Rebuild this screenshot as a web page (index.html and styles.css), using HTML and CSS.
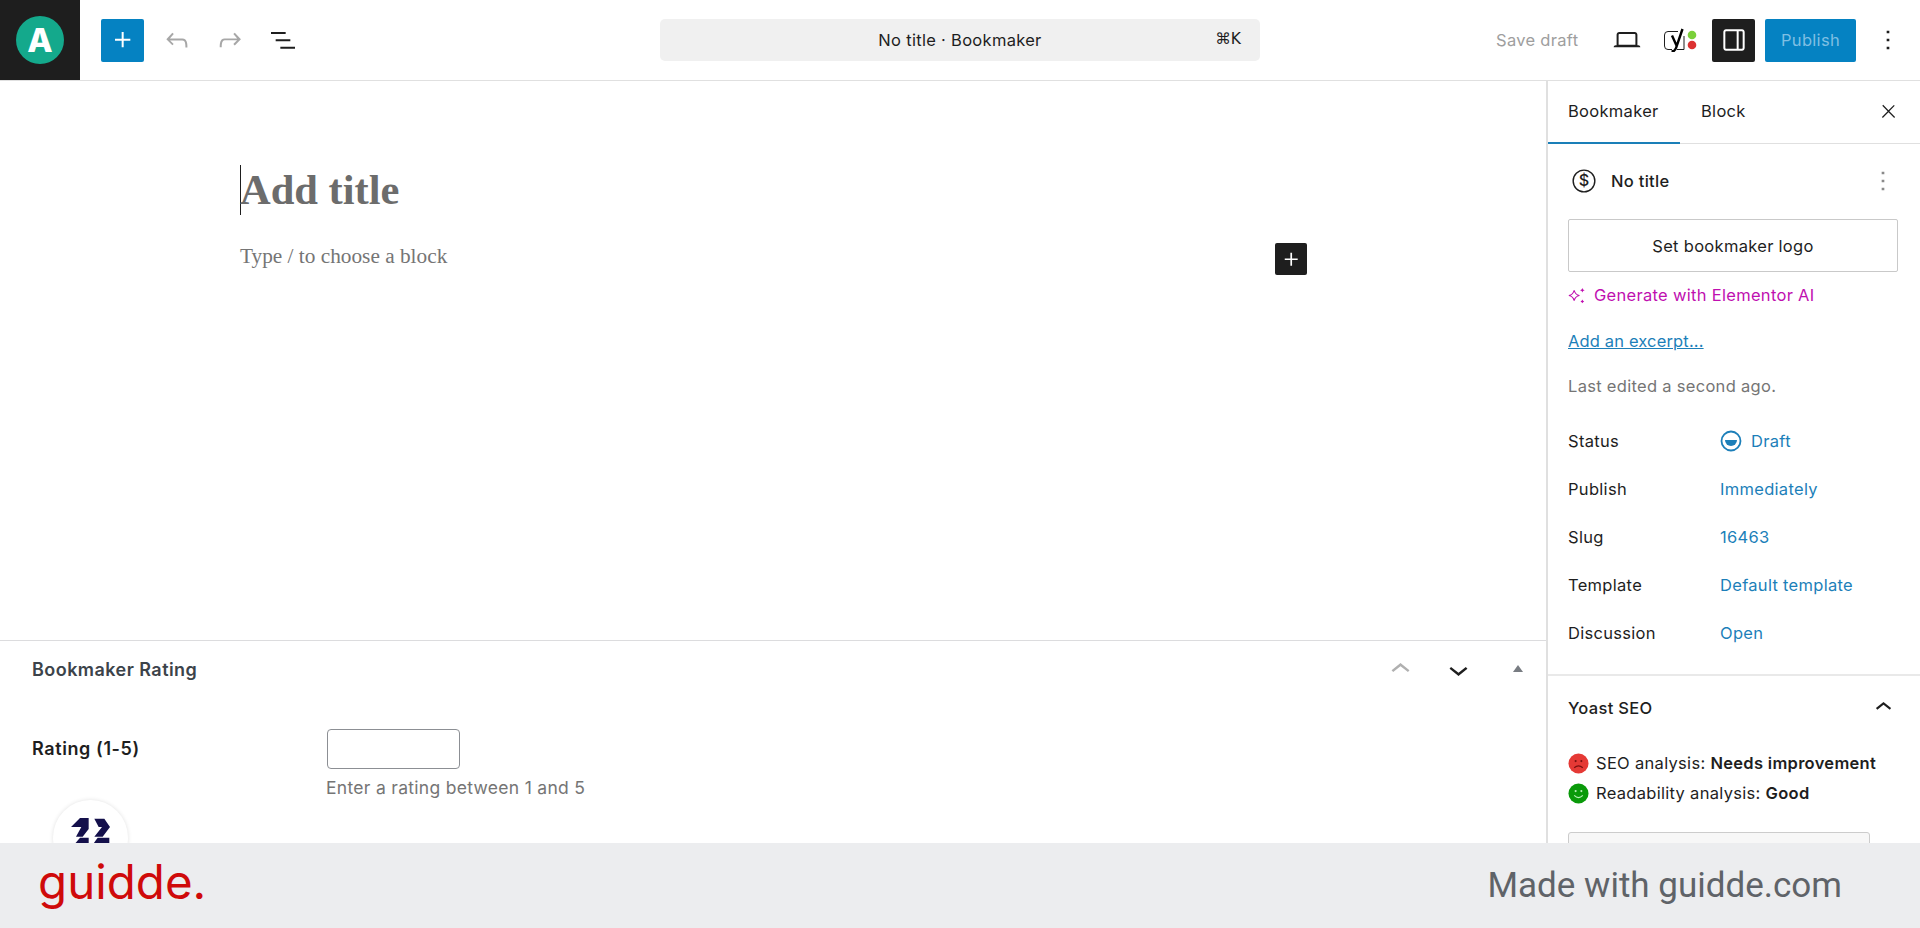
FILE: index.html
```html
<!DOCTYPE html>
<html lang="en">
<head>
<meta charset="utf-8">
<title>No title · Bookmaker</title>
<link rel="stylesheet" href="styles.css">
</head>
<body>
<div class="app">
  <header class="topbar">
    <div class="top-left">
      <div class="site-logo">
        <div class="site-circle">A</div>
      </div>
      <button class="btn-add"><svg class="ic" viewBox="0 0 24 24"><path d="M11 12.5V17.5H12.5V12.5H17.5V11H12.5V6H11V11H6V12.5H11Z"/></svg></button>
      <span class="tool tool-off"><svg class="ic" viewBox="0 0 24 24"><path d="M18.3 11.7c-.6-.6-1.4-.9-2.3-.9H6.7l2.9-3.3-1.1-1-4.5 5L8.5 16l1-1-2.7-2.7H16c.5 0 .9.2 1.3.5 1 1 1 3.4 1 4.5v.3h1.5v-.2c0-1.5 0-4.3-1.5-5.7z"/></svg></span>
      <span class="tool tool-off"><svg class="ic" viewBox="0 0 24 24"><path d="M15.6 6.5l-1.1 1 2.9 3.3H8c-.9 0-1.7.3-2.3.9-1.4 1.5-1.4 4.2-1.4 5.6v.2h1.5v-.3c0-1.1 0-3.5 1-4.5.3-.3.7-.5 1.3-.5h9.2L14.5 15l1.1 1.1 4.6-4.6-4.6-5z"/></svg></span>
      <span class="tool"><svg class="ic" viewBox="0 0 24 24"><path d="M3 6h11v1.5H3V6zm3.5 5.5h11V13h-11v-1.5zM21 17H10v1.5h11V17z"/></svg></span>
    </div>
    <div class="command-bar">
      <span class="command-title">No title · Bookmaker</span>
      <span class="command-key">⌘K</span>
    </div>
    <div class="top-right">
      <span class="save-draft">Save draft</span>
      <span class="tool tool-laptop"><svg class="ic" viewBox="0 0 24 24"><path d="M20.5 16h-.7V8c0-1.1-.9-2-2-2H6.2c-1.1 0-2 .9-2 2v8h-.7c-.8 0-1.5.7-1.5 1.5h20c0-.8-.7-1.5-1.5-1.5zM5.7 8c0-.3.2-.5.5-.5h11.6c.3 0 .5.2.5.5v7.6H5.7V8z"/></svg></span>
      <svg class="yoast" viewBox="0 0 34 24">
        <path d="M14 3.500H4a3.500 3.500 0 0 0-3.500 3.500v11a3.500 3.500 0 0 0 3.500 3.500H8M20 8v13.500H13" class="y-box"/>
        <path d="M8 7.500l4.500 10M18.500 1l-6.500 19q-1 3.500-4.500 3.500" class="y-mark"/>
        <circle cx="28" cy="7" r="4.300" fill="#7ad03a"/>
        <circle cx="28" cy="17" r="4.300" fill="#dc3232"/>
      </svg>
      <button class="btn-panel"><svg class="ic ic-white" viewBox="0 0 24 24"><path d="M18 4H6c-1.100 0-2 .9-2 2v12c0 1.100.9 2 2 2h12c1.100 0 2-.9 2-2V6c0-1.100-.9-2-2-2zm-4 14.500H6c-.3 0-.5-.2-.5-.5V6c0-.3.2-.5.5-.5h8v13zm4.500-.5c0 .3-.2.5-.5.5h-2.500v-13H18c.3 0 .5.2.5.5v12z"/></svg></button>
      <button class="btn-publish">Publish</button>
      <span class="tool tool-more"><svg class="ic" viewBox="0 0 24 24"><path d="M13 19h-2v-2h2v2zm0-6h-2v-2h2v2zm0-6h-2V5h2v2z"/></svg></span>
    </div>
  </header>

  <main class="workspace">
    <section class="editor">
      <div class="canvas">
        <div class="title-row">
          <span class="caret"></span>
          <h1 class="post-title">Add title</h1>
        </div>
        <div class="block-row">
          <p class="block-hint">Type / to choose a block</p>
          <button class="btn-block"><svg class="ic ic-white ic-small" viewBox="0 0 24 24"><path d="M11 12.500V17.500H12.500V12.500H17.500V11H12.500V6H11V11H6V12.500H11Z"/></svg></button>
        </div>
      </div>
      <div class="metabox">
        <div class="metabox-head">
          <h2 class="metabox-title">Bookmaker Rating</h2>
          <span class="mb-ctl mb-up"><svg class="ic ic-chev" viewBox="0 0 24 24"><path d="M6.500 12.400L12 8l5.500 4.400-.9 1.200L12 10l-4.500 3.600-1-1.200z"/></svg></span>
          <span class="mb-ctl mb-down"><svg class="ic ic-chev" viewBox="0 0 24 24"><path d="M17.500 11.600L12 16l-5.500-4.400.9-1.200L12 14l4.500-3.600 1 1.200z"/></svg></span>
          <span class="mb-triangle"></span>
        </div>
        <div class="metabox-row">
          <label class="rating-label">Rating (1-5)</label>
          <div class="rating-field">
            <div class="rating-input"></div>
            <p class="rating-help">Enter a rating between 1 and 5</p>
          </div>
        </div>
      </div>
      <div class="float-badge">
        <svg class="badge-mark" viewBox="95 70 117 75">
          <path d="M95 97L122 70H148V103L130 126H110L126 97Z" fill="#14104b"/>
          <path d="M122 129H148V146H108Z" fill="#14104b"/>
          <path d="M165 72H195L212 97L190 126H165L188 97H178Z" fill="#14104b"/>
          <path d="M175 129H210V146H163Z" fill="#14104b"/>
        </svg>
      </div>
    </section>

    <aside class="sidebar">
      <div class="tabs">
        <span class="tab tab-active">Bookmaker</span>
        <span class="tab tab-block">Block</span>
        <span class="tab-close"><svg class="ic ic-close" viewBox="0 0 24 24"><path d="M13 11.800l6.100-6.300-1-1-6.100 6.200-6.100-6.300-1 1 6.100 6.300-6.500 6.700 1 1 6.500-6.600 6.500 6.600 1-1z"/></svg></span>
      </div>
      <div class="panel">
        <div class="doc-head">
          <svg class="dollar" viewBox="0 0 24 24">
            <circle cx="12" cy="12" r="10" fill="none" stroke="#1e1e1e" stroke-width="1.300"/>
            <text x="12" y="17" text-anchor="middle" class="dollar-sign">$</text>
          </svg>
          <span class="doc-title">No title</span>
          <span class="doc-more"><svg class="ic" viewBox="0 0 24 24"><path d="M13 19h-2v-2h2v2zm0-6h-2v-2h2v2zm0-6h-2V5h2v2z"/></svg></span>
        </div>
        <button class="btn-logo">Set bookmaker logo</button>
        <div class="ai-link">
          <svg class="spark" viewBox="0 0 18 18">
            <path d="M7 4.500c.6 2.800 1.700 3.900 4.500 4.500-2.800.6-3.900 1.700-4.500 4.500C6.400 10.700 5.300 9.600 2.500 9 5.300 8.400 6.400 7.300 7 4.500z" fill="none" stroke="#c00fb0" stroke-width="1"/>
            <path d="M14 2.500l.6 1.400 1.400.6-1.400.6-.6 1.400-.6-1.400-1.400-.6 1.400-.6zM14 12.500l.6 1 1 .6-1 .6-.6 1-.6-1-1-.6 1-.6z" fill="#c00fb0"/>
          </svg>
          <span>Generate with Elementor AI</span>
        </div>
        <a class="excerpt">Add an excerpt...</a>
        <p class="edited">Last edited a second ago.</p>
        <dl class="meta">
          <div class="meta-row"><dt>Status</dt><dd><svg class="draft-ic" viewBox="0 0 22 22"><circle cx="11" cy="11" r="9.500" fill="none" stroke="#1c7fb9" stroke-width="1.800"/><path d="M5 10h12a6 6 0 0 1-12 0z" fill="#1c7fb9"/></svg>Draft</dd></div>
          <div class="meta-row"><dt>Publish</dt><dd>Immediately</dd></div>
          <div class="meta-row"><dt>Slug</dt><dd>16463</dd></div>
          <div class="meta-row"><dt>Template</dt><dd>Default template</dd></div>
          <div class="meta-row"><dt>Discussion</dt><dd>Open</dd></div>
        </dl>
      </div>
      <div class="yoast-panel">
        <div class="yoast-head">
          <span class="yoast-title">Yoast SEO</span>
          <span class="yoast-chev"><svg class="ic ic-chev-sm" viewBox="0 0 24 24"><path d="M6.500 12.400L12 8l5.500 4.400-.9 1.200L12 10l-4.500 3.600-1-1.200z"/></svg></span>
        </div>
        <div class="score">
          <svg class="face" viewBox="0 0 22 22"><circle cx="11" cy="11" r="10.500" fill="#e53935"/><circle cx="8" cy="8.500" r="1.100" fill="#7a1010"/><circle cx="14" cy="8.500" r="1.100" fill="#7a1010"/><path d="M6.500 15.500q4.500-4 9 0" fill="none" stroke="#7a1010" stroke-width="1.200"/></svg>
          <span>SEO analysis: <b>Needs improvement</b></span>
        </div>
        <div class="score score-2">
          <svg class="face" viewBox="0 0 22 22"><circle cx="11" cy="11" r="10.500" fill="#0a9a0a"/><circle cx="8" cy="8.500" r="1.100" fill="#b8f0b8"/><circle cx="14" cy="8.500" r="1.100" fill="#b8f0b8"/><path d="M6.500 13q4.500 4.500 9 0" fill="none" stroke="#b8f0b8" stroke-width="1.200"/></svg>
          <span>Readability analysis: <b>Good</b></span>
        </div>
        <div class="yoast-box"></div>
      </div>
    </aside>
  </main>

  <footer class="brandbar">
    <span class="brand-logo">guidde.</span>
    <span class="brand-note">Made with guidde.com</span>
  </footer>
</div>
</body>
</html>
```
FILE: styles.css
```css
* { box-sizing: border-box; }
html, body { margin: 0; padding: 0; height: 100%; overflow: hidden; background: #fff; }
body { font-family: Inter, "Liberation Sans", sans-serif; font-size: 16.5px; letter-spacing: .3px; color: #1e1e1e; }
button { font: inherit; letter-spacing: inherit; border: 0; padding: 0; cursor: pointer; }
h1, h2, p, dl, dd { margin: 0; }

.app { display: flex; flex-direction: column; height: 928px; }

.ic { width: 32px; height: 32px; display: block; fill: #1e1e1e; }
.ic-white { fill: #fff; }
.ic-small { width: 27px; height: 27px; }
.ic-close { width: 21px; height: 21px; }
.ic-chev { width: 39px; height: 39px; }
.ic-chev-sm { width: 33px; height: 33px; }

.topbar { display: flex; align-items: center; height: 81px; flex: none; border-bottom: 1px solid #e0e0e0; }
.top-left { display: flex; align-items: center; width: 660px; height: 80px; flex: none; }
.site-logo { width: 80px; height: 80px; background: #1e1e1e; display: flex; align-items: center; justify-content: center; }
.site-circle { width: 48px; height: 48px; border-radius: 50%; background: #14a98c; color: #fff; font-size: 33px; font-weight: 800; line-height: 48px; text-align: center; letter-spacing: 0; }
.btn-add { width: 43px; height: 43px; margin-left: 21px; background: #0582c2; border-radius: 2px; display: flex; align-items: center; justify-content: center; }
.btn-add .ic { fill: #fff; }
.tool { width: 53px; display: flex; justify-content: center; }
.top-left .tool:nth-of-type(1) { margin-left: 6px; }
.tool-off .ic { fill: #a7a7a7; }

.command-bar { position: relative; width: 600px; height: 42px; flex: none; background: #f0f0f0; border-radius: 5px; display: flex; align-items: center; justify-content: center; }
.command-key { position: absolute; right: 19px; top: 11px; font-size: 15.500px; letter-spacing: 0; font-family: "DejaVu Sans", Inter, sans-serif; }

.top-right { flex: 1; display: flex; align-items: center; height: 80px; }
.save-draft { margin-left: 236px; color: #9e9e9e; white-space: nowrap; width: 82px; flex: none; }
.tool-laptop { width: 32px; margin-left: 33px; }
.yoast { width: 34px; height: 24px; margin-left: 21px; flex: none; }
.y-box { fill: none; stroke: #1e1e1e; stroke-width: 1; }
.y-mark { fill: none; stroke: #000; stroke-width: 2.400; }
.btn-panel { width: 43px; height: 43px; margin-left: 14px; background: #1e1e1e; border-radius: 2px; display: flex; align-items: center; justify-content: center; }
.btn-publish { width: 91px; height: 43px; margin-left: 10px; background: #0582c2; color: #7fbfe3; border-radius: 2px; }
.tool-more { width: 32px; margin-left: 16px; }

.workspace { position: relative; flex: 1; display: flex; overflow: hidden; min-height: 0; }
.editor { flex: 1; display: flex; flex-direction: column; min-width: 0; }
.canvas { height: 559px; flex: none; padding: 84px 0 0 240px; }
.title-row { display: flex; align-items: center; height: 50px; }
.caret { width: 1px; height: 50px; background: #1e1e1e; flex: none; }
.post-title { font-family: "Liberation Serif", serif; font-size: 42.500px; font-weight: 700; line-height: 50px; color: #6c6c6c; letter-spacing: 0; margin-left: -1px; }
.block-row { display: flex; align-items: center; margin-top: 28px; height: 32px; position: relative; }
.block-hint { font-family: "Liberation Serif", serif; font-size: 21.300px; letter-spacing: 0; color: #757575; line-height: 32px; margin-top: -6px; width: 1035px; flex: none; }
.btn-block { width: 32px; height: 32px; background: #1e1e1e; border-radius: 2px; display: flex; align-items: center; justify-content: center; }

.metabox { flex: 1; border-top: 1px solid #dcdcde; }
.metabox-head { display: flex; align-items: center; height: 57px; padding-left: 32px; }
.metabox-title { flex: 1; font-size: 18px; font-weight: 600; color: #3c434a; letter-spacing: .45px; }
.mb-ctl { width: 58px; display: flex; justify-content: center; }
.mb-up .ic { fill: #b0b0b0; }
.mb-triangle { width: 0; height: 0; margin: 0 23px 2px 26px; border-left: 5px solid transparent; border-right: 5px solid transparent; border-bottom: 7px solid #787c82; }
.metabox-row { display: flex; padding: 31px 0 0 32px; }
.rating-label { width: 294px; flex: none; font-size: 18px; font-weight: 600; line-height: 20px; margin-top: 10px; letter-spacing: .6px; }
.rating-field { display: flex; flex-direction: column; }
.rating-input { width: 133px; height: 40px; border: 1px solid #8c8f94; border-radius: 4px; background: #fff; margin-left: 1px; }
.rating-help { margin-top: 9px; color: #757575; font-size: 17.500px; line-height: 20px; }
.float-badge { position: absolute; left: 53px; top: 719px; width: 75px; height: 75px; border-radius: 50%; background: #fff; box-shadow: 0 0 4px rgba(0, 0, 0, .12); display: flex; justify-content: center; padding-top: 18px; }
.badge-mark { width: 39px; height: 25px; display: block; }

.sidebar { width: 374px; flex: none; border-left: 2px solid #e0e0e0; display: flex; flex-direction: column; }
.tabs { display: flex; align-items: stretch; height: 63px; flex: none; border-bottom: 1px solid #e0e0e0; position: relative; }
.tab { padding: 0 20px; line-height: 60px; }
.tab-active { box-shadow: inset 0 -2px 0 #1a7fb8; height: 63px; width: 132px; }
.tab-block { margin-left: 1px; }
.tab-close { margin-left: auto; margin-right: 21px; display: flex; align-items: center; height: 60px; }

.panel { padding: 19px 20px 0; border-bottom: 2px solid #e9e9e9; height: 532px; flex: none; }
.doc-head { display: flex; align-items: center; height: 36px; }
.dollar { width: 26px; height: 26px; margin-left: 3px; flex: none; }
.dollar-sign { font-family: Inter, sans-serif; font-size: 15px; font-weight: 500; fill: #1e1e1e; letter-spacing: 0; }
.doc-title { margin-left: 14px; font-weight: 500; flex: 1; }
.doc-more { margin-right: 1px; }
.doc-more .ic { fill: #8a8a8a; }
.btn-logo { display: block; width: 330px; height: 53px; margin-top: 20px; background: #fff; border: 1px solid #c9c9c9; border-radius: 2px; color: #1e1e1e; }
.ai-link { display: flex; align-items: center; margin-top: 11px; color: #c00fb0; line-height: 24px; gap: 7px; }
.spark { width: 21px; height: 21px; flex: none; margin-left: -2px; }
.excerpt { display: block; margin-top: 22px; color: #1c7fb9; text-decoration: underline; line-height: 24px; letter-spacing: .15px; }
.edited { margin-top: 21px; color: #757575; line-height: 24px; }
.meta { margin-top: 19px; }
.meta-row { display: flex; align-items: center; height: 48px; }
.meta-row dt { width: 152px; flex: none; }
.meta-row dd { color: #1c7fb9; display: flex; align-items: center; gap: 9px; }
.draft-ic { width: 22px; height: 22px; }

.yoast-panel { padding: 0 20px; flex: 1; overflow: hidden; }
.yoast-head { display: flex; align-items: center; justify-content: space-between; height: 63px; }
.yoast-title { font-weight: 500; }
.score { display: flex; align-items: center; gap: 7px; height: 30px; margin-top: 9px; white-space: nowrap; }
.score-2 { margin-top: 0; }
.score b { font-weight: 600; }
.face { width: 21px; height: 21px; flex: none; }
.yoast-box { width: 302px; height: 60px; margin-top: 24px; background: #f7f7f7; border: 1px solid #ccc; border-radius: 3px; }

.brandbar { position: relative; height: 85px; flex: none; background: #ecedef; display: flex; align-items: center; justify-content: space-between; padding: 0 78px 0 38px; }
.brand-logo { font-family: Inter, sans-serif; font-size: 47.500px; color: #cf0a0a; letter-spacing: 0; line-height: 60px; margin-top: -8px; }
.brand-note { font-family: Roboto, sans-serif; font-size: 35px; letter-spacing: 0; color: #5f6368; line-height: 44px; }
```
